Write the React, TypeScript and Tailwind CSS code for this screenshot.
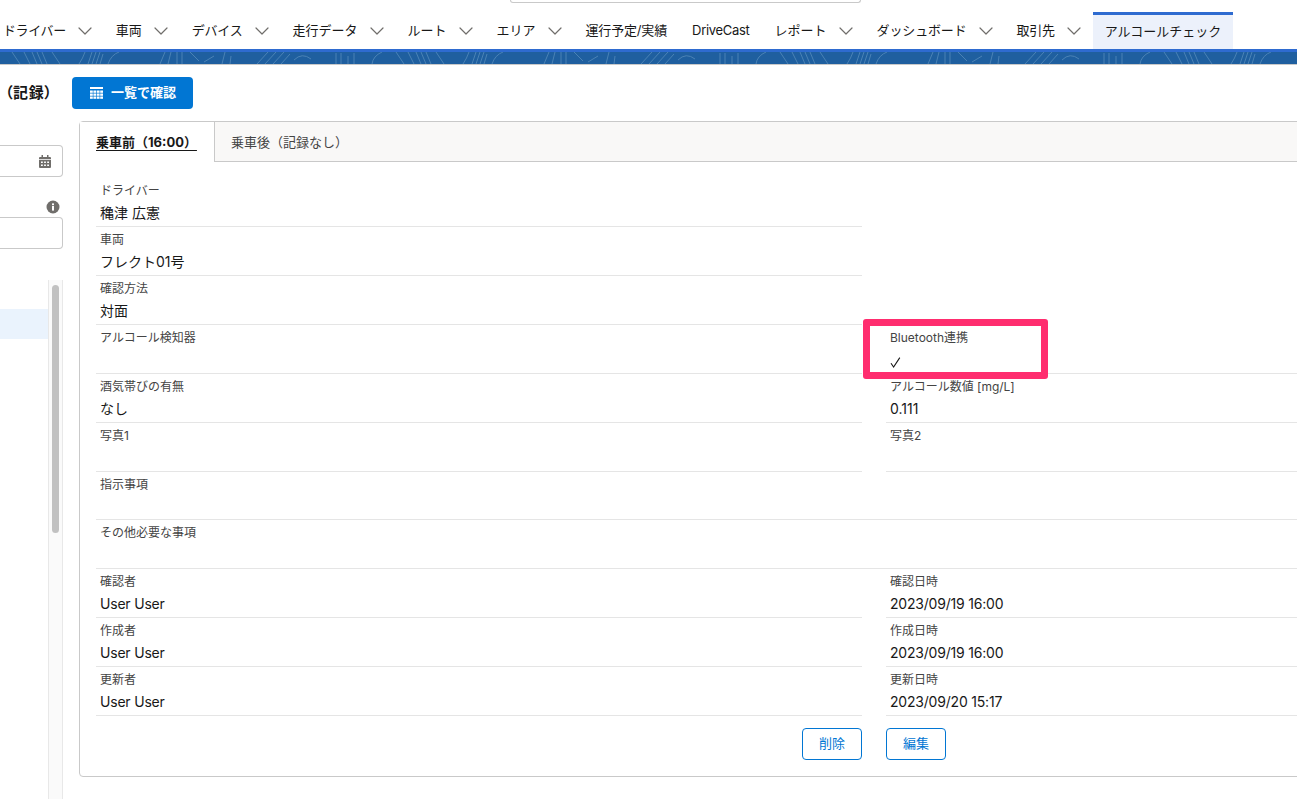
import { Fragment, type ReactNode } from 'react';
import { ChevronDown } from 'lucide-react';

const navItems = [
  { label: 'ドライバー', menu: true, tune: 'tracking-[-0.4px]' },
  { label: '車両', menu: true, tune: '' },
  { label: 'デバイス', menu: true, tune: 'tracking-[-0.25px]' },
  { label: '走行データ', menu: true, tune: '' },
  { label: 'ルート', menu: true, tune: '' },
  { label: 'エリア', menu: true, tune: '' },
  { label: '運行予定/実績', menu: false, tune: 'tracking-[-0.15px]' },
  { label: 'DriveCast', menu: false, tune: 'tracking-[-0.3px]' },
  { label: 'レポート', menu: true, tune: '' },
  { label: 'ダッシュボード', menu: true, tune: 'tracking-[-0.15px]' },
  { label: '取引先', menu: true, tune: 'tracking-[-0.3px]' },
];

function CheckMark() {
  return (
    <svg width="11" height="11" viewBox="0 0 11 11" fill="none" stroke="#181818" strokeWidth="1.1" className="mt-[10px]">
      <path d="M1 6.2 L3.6 10 L9.8 0.6" />
    </svg>
  );
}

const rows: { left: [string, string]; right?: [string, ReactNode] }[] = [
  { left: ['ドライバー', '穐津 広憲'] },
  { left: ['車両', 'フレクト01号'] },
  { left: ['確認方法', '対面'] },
  { left: ['アルコール検知器', ''], right: ['Bluetooth連携', <CheckMark />] },
  { left: ['酒気帯びの有無', 'なし'], right: ['アルコール数値 [mg/L]', '0.111'] },
  { left: ['写真1', ''], right: ['写真2', ''] },
];

const rowsBottom: { left: [string, string]; right: [string, string] }[] = [
  { left: ['確認者', 'User User'], right: ['確認日時', '2023/09/19 16:00'] },
  { left: ['作成者', 'User User'], right: ['作成日時', '2023/09/19 16:00'] },
  { left: ['更新者', 'User User'], right: ['更新日時', '2023/09/20 15:17'] },
];

function Field({ label, value, short }: { label: string; value: ReactNode; short?: boolean }) {
  const latin = typeof value === 'string' && /[A-Za-z/]/.test(value);
  return (
    <div className={`border-b border-[#e5e5e5] px-1 pt-[4px] ${short ? 'h-[48px]' : 'h-[49px]'}`}>
      <div className="h-[18px] text-[12px] leading-[18px] text-[#444444]">{label}</div>
      <div className={`mt-[2px] h-[21px] text-[14px] leading-[21px] text-[#181818] ${latin ? 'tracking-[-0.2px]' : ''}`}>{value}</div>
    </div>
  );
}

// one period of the faint contour lines in the header strip (repeats every 384px)
const contour = [
  'M12 0 L20 12', 'M24 0 L30 12', 'M32 0 L37 12', 'M37 0 L42 12', 'M42 0 L47 12', 'M52 0 L60 12',
  'M79 12 Q83 6 85 0', 'M88 12 L92 0', 'M92 12 L96 0', 'M96 12 L100 0', 'M100 12 L103 2', 'M108 12 Q111 3 119 0',
  'M160 12 L165 0', 'M168 12 L171 0', 'M177 0 L177 12', 'M182 0 L182 12', 'M190 0 L199 9', 'M204 10 L214 4', 'M222 12 L225 0', 'M230 12 L231 4',
  'M257 12 L268 0', 'M265 12 L276 0', 'M273 12 L284 0', 'M281 12 L290 2', 'M294 8 Q302 0 311 7',
  'M336 1 L336 12', 'M341 1 L341 12', 'M348 4 L348 12', 'M354 1 L354 12', 'M372 12 Q373 4 382 0',
];

function BannerPattern() {
  return (
    <svg className="absolute inset-0 h-full w-full" viewBox="0 0 1297 12" preserveAspectRatio="none" fill="none" stroke="#4f86b8" strokeWidth="0.9">
      {[0, 384, 768, 1152].map((x) => (
        <g key={x} transform={`translate(${x} 0)`}>
          {contour.map((d) => <path key={d} d={d} />)}
        </g>
      ))}
    </svg>
  );
}

function TableIcon() {
  return (
    <svg width="13" height="14" viewBox="0 0 13 14" fill="#ffffff">
      <rect x="0" y="1" width="13" height="2" />
      {[4.5, 7.5, 10.5].map((y) =>
        [0, 3.4, 6.8, 10.2].map((x) => <rect key={`${x}-${y}`} x={x} y={y} width="2.8" height="2.3" />),
      )}
    </svg>
  );
}

function CalendarIcon() {
  return (
    <svg width="12" height="13" viewBox="0 0 12 13" fill="#706e6b">
      <rect x="2.5" y="0" width="1.5" height="2.5" />
      <rect x="8" y="0" width="1.5" height="2.5" />
      <path d="M0 3a1 1 0 0 1 1-1h10a1 1 0 0 1 1 1v1.2H0z" />
      <path fillRule="evenodd" d="M0 5h12v7a1 1 0 0 1-1 1H1a1 1 0 0 1-1-1zM2 6.5v1.5h1.8V6.5zm3.1 0v1.5h1.8V6.5zm3.1 0v1.5H10V6.5zM2 9.5V11h1.8V9.5zm3.1 0V11h1.8V9.5zm3.1 0V11H10V9.5z" />
    </svg>
  );
}

function InfoIcon() {
  return (
    <svg width="14" height="14" viewBox="0 0 14 14">
      <circle cx="7" cy="7" r="6.5" fill="#706e6b" />
      <rect x="6" y="6" width="2" height="4.6" fill="#ffffff" />
      <rect x="6" y="3.4" width="2" height="1.8" fill="#ffffff" />
    </svg>
  );
}

export default function App() {
  return (
    <div className="relative h-[799px] w-[1297px] overflow-hidden bg-white font-['Inter','Noto_Sans_CJK_JP',sans-serif] text-[#181818]">
      {/* top of the global search box */}
      <div className="ml-[510px] h-[3px] w-[351px] rounded-b border border-t-0 border-[#c9c9c9]" />

      {/* Nav tabs */}
      <div className="mt-[9px] flex h-[37px] items-stretch -ml-[10px] text-[13px] text-[#181818]">
        {navItems.map((item) => (
          <div key={item.label} className={`flex items-center pt-[1px] ${item.menu ? 'pr-[5px]' : ''}`}>
            <span className={`pl-[13px] ${item.menu ? 'pr-[7px]' : 'pr-[12px]'} ${item.tune}`}>{item.label}</span>
            {item.menu && (
              <span className="flex w-[25px] justify-center">
                <ChevronDown size={24} strokeWidth={1.2} className="text-[#706e6b]" />
              </span>
            )}
          </div>
        ))}
        <div className="ml-[1px] flex w-[140px] items-center border-t-[3px] border-[#2e6bd0] bg-[#ecf1fb] pl-3">アルコールチェック</div>
      </div>
      <div className="relative h-[16px] border-t-[3px] border-b border-t-[#2e6bd0] border-b-[#c9c9c9] bg-[#1f5f9f]">
        <BannerPattern />
      </div>

      {/* Page header */}
      <div className="mt-[11px] flex h-[33px] items-center">
        <div className="w-[72px] pl-[5px] text-[15px] font-bold leading-[30px] tracking-[0.6px] [font-feature-settings:'palt']">（記録）</div>
        <button className="flex h-[32px] w-[121px] items-center gap-[8px] rounded bg-[#0176d3] pl-[18px] text-[13px] font-bold text-white">
          <TableIcon />
          一覧で確認
        </button>
      </div>

      <div className="mt-[12px] flex items-start gap-[16px]">
        {/* Left form column, cut off by the window */}
        <div className="w-[63px] shrink-0 pt-[24px]">
          <div className="flex h-[32px] items-center justify-end rounded-r border border-l-0 border-[#c9c9c9] pr-[11px]">
            <CalendarIcon />
          </div>
          <div className="mt-[19px] flex h-[21px] items-center justify-end pr-[3px]">
            <InfoIcon />
          </div>
          <div className="h-[32px] rounded-r border border-l-0 border-[#c9c9c9]" />
          <div className="mt-[31px] flex h-[520px]">
            <div className="mt-[29px] h-[30px] w-[48px] bg-[#eaf3fd]" />
            <div className="h-full w-[15px] border-x border-[#e8e8e8] bg-[#fafafa] px-[3px] pt-[5px]">
              <div className="h-[248px] rounded-full bg-[#c1c1c1]" />
            </div>
          </div>
        </div>

        {/* Record panel */}
        <div className="h-[656px] w-[1300px] shrink-0 rounded border border-[#c9c9c9]">
          <div className="flex h-[40px] border-b border-[#c9c9c9] bg-[#f9f8f7] text-[13px]">
            <div className="-mb-px flex w-[135px] justify-center border-r border-[#c9c9c9] bg-white pt-[11px]">
              <span className="w-[102px] font-bold underline underline-offset-[3px]">乗車前（16:00）</span>
            </div>
            <div className="pl-[16px] pt-[11px] text-[#444444]">乗車後（記録なし）</div>
          </div>

          <div className="px-[16px] pt-[16px]">
            <div className="grid grid-cols-[766px_766px] gap-x-[24px]">
              {rows.map((r) => (
                <Fragment key={r.left[0]}>
                  <Field label={r.left[0]} value={r.left[1]} />
                  {r.right ? <Field label={r.right[0]} value={r.right[1]} /> : <div />}
                </Fragment>
              ))}
            </div>
            <Field label="指示事項" value="" short />
            <Field label="その他必要な事項" value="" />
            <div className="grid grid-cols-[766px_766px] gap-x-[24px]">
              {rowsBottom.map((r) => (
                <Fragment key={r.left[0]}>
                  <Field label={r.left[0]} value={r.left[1]} />
                  <Field label={r.right[0]} value={r.right[1]} />
                </Fragment>
              ))}
            </div>
            <div className="mt-[12px] ml-[706px] flex gap-[24px] text-[13px] text-[#0176d3]">
              <button className="h-[32px] w-[60px] rounded border border-[#0176d3]">削除</button>
              <button className="h-[32px] w-[60px] rounded border border-[#0176d3]">編集</button>
            </div>
          </div>
        </div>
      </div>

      {/* Annotation drawn over the screenshot */}
      <div className="absolute left-[863px] top-[319px] h-[60px] w-[185px] rounded-[3px] border-[7px] border-[#ff2d6f]" />
    </div>
  );
}
